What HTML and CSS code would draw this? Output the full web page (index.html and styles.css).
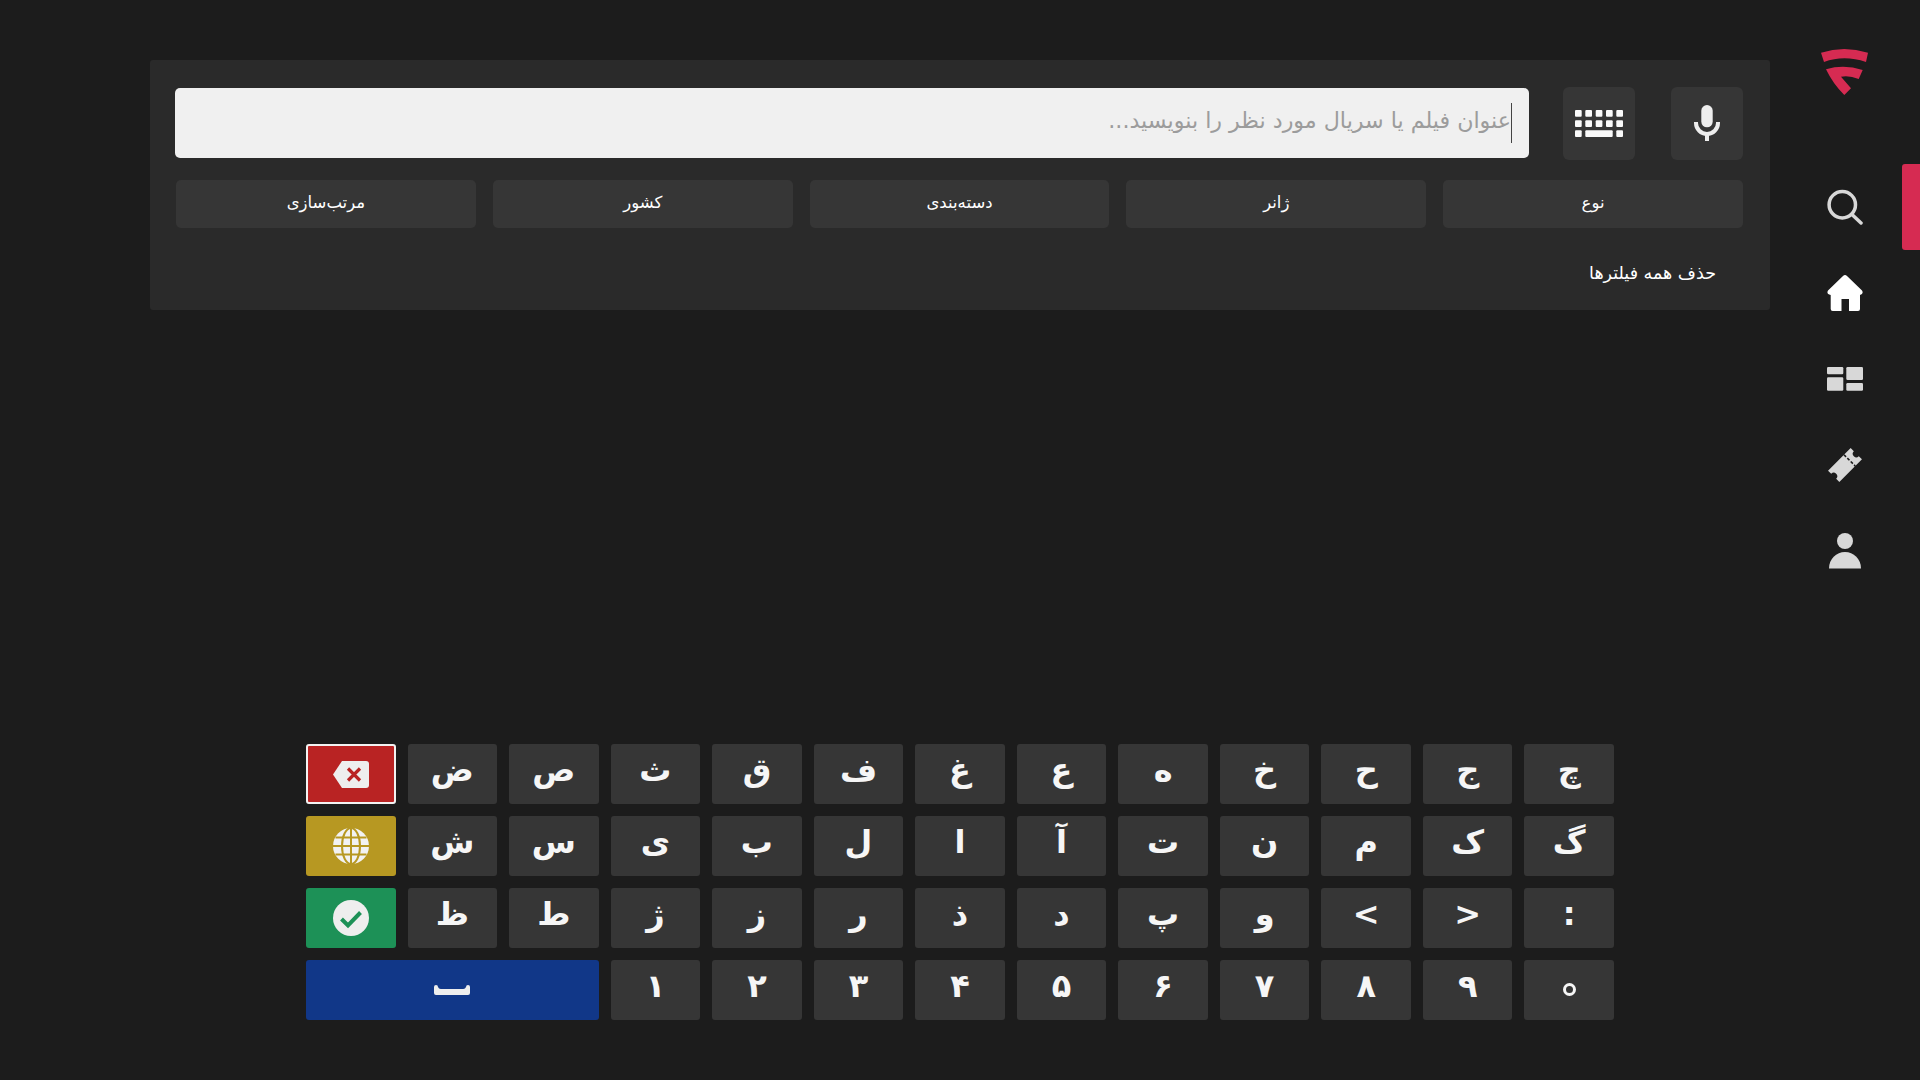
FILE: index.html
```html
<!DOCTYPE html>
<html lang="fa">
<head>
<meta charset="utf-8">
<title>جستجو</title>
<link rel="stylesheet" href="styles.css">
</head>
<body>
<main class="main">
  <section class="panel">
    <div class="search-row">
      <button class="icon-btn" aria-label="mic">
        <svg class="mic" viewBox="0 0 26 36"><rect x="7.3" y="0" width="11.4" height="22.3" rx="5.7" fill="#eee"/><path d="M2 17v1a11 11 0 0 0 22 0v-1" fill="none" stroke="#eee" stroke-width="4"/><rect x="11" y="27" width="4" height="9" fill="#eee"/></svg>
      </button>
      <button class="icon-btn" aria-label="keyboard">
        <svg class="kbd" viewBox="0 0 48 27" fill="#fafafa"><rect x="0" y="0" width="6.7" height="6.7" rx="1"/><rect x="10.3" y="0" width="6.7" height="6.7" rx="1"/><rect x="20.7" y="0" width="6.7" height="6.7" rx="1"/><rect x="31" y="0" width="6.7" height="6.7" rx="1"/><rect x="41.3" y="0" width="6.7" height="6.7" rx="1"/><rect x="0" y="10.2" width="6.7" height="6.7" rx="1"/><rect x="10.3" y="10.2" width="6.7" height="6.7" rx="1"/><rect x="20.7" y="10.2" width="6.7" height="6.7" rx="1"/><rect x="31" y="10.2" width="6.7" height="6.7" rx="1"/><rect x="41.3" y="10.2" width="6.7" height="6.7" rx="1"/><rect x="0" y="20.3" width="6.7" height="6.7" rx="1"/><rect x="10.3" y="20.3" width="27.4" height="6.7" rx="1"/><rect x="41.3" y="20.3" width="6.7" height="6.7" rx="1"/></svg>
      </button>
      <div class="search-input"><span class="placeholder">عنوان فیلم یا سریال مورد نظر را بنویسید...</span></div>
    </div>
    <div class="filters">
      <button class="filter">نوع</button>
      <button class="filter">ژانر</button>
      <button class="filter">دسته‌بندی</button>
      <button class="filter">کشور</button>
      <button class="filter">مرتب‌سازی</button>
    </div>
    <div class="clear">حذف همه فیلترها</div>
  </section>

  <section class="keyboard">
    <div class="key">چ</div><div class="key">ج</div><div class="key">ح</div><div class="key">خ</div><div class="key">ه</div><div class="key">ع</div><div class="key">غ</div><div class="key">ف</div><div class="key">ق</div><div class="key">ث</div><div class="key">ص</div><div class="key">ض</div>
    <div class="key key-del">
      <svg class="del-ic" viewBox="0 0 36 27"><path d="M9 0H33a3 3 0 0 1 3 3V24a3 3 0 0 1-3 3H9L0 13.5Z" fill="#eee"/><path d="M15 7.5l12 12M27 7.5l-12 12" stroke="#b92323" stroke-width="3.2" fill="none"/></svg>
    </div>
    <div class="key">گ</div><div class="key">ک</div><div class="key">م</div><div class="key">ن</div><div class="key">ت</div><div class="key">آ</div><div class="key">ا</div><div class="key">ل</div><div class="key">ب</div><div class="key">ی</div><div class="key">س</div><div class="key">ش</div>
    <div class="key key-lang">
      <svg class="lang-ic" viewBox="0 0 36 36"><circle cx="18" cy="18" r="18" fill="#f2f2f2"/><g fill="none" stroke="#b79822" stroke-width="2"><ellipse cx="18" cy="18" rx="9" ry="18"/><path d="M18 0V36M0 18H36M2.5 9.5H33.5M2.5 26.500H33.5"/></g></svg>
    </div>
    <div class="key">:</div><div class="key">&gt;</div><div class="key">&lt;</div><div class="key">و</div><div class="key">پ</div><div class="key">د</div><div class="key">ذ</div><div class="key">ر</div><div class="key">ز</div><div class="key">ژ</div><div class="key">ط</div><div class="key">ظ</div>
    <div class="key key-ok">
      <svg class="ok-ic" viewBox="0 0 36 36"><circle cx="18" cy="18" r="18" fill="#eee"/><path d="M8.500 19l6.500 6.500L27.500 12.500" fill="none" stroke="#1d9157" stroke-width="4"/></svg>
    </div>
    <div class="key key-zero">۰</div><div class="key">۹</div><div class="key">۸</div><div class="key">۷</div><div class="key">۶</div><div class="key">۵</div><div class="key">۴</div><div class="key">۳</div><div class="key">۲</div><div class="key">۱</div>
    <div class="key key-space">
      <svg class="space-ic" viewBox="0 0 36 10"><path d="M0 2a2 2 0 0 1 4 0 3 3 0 0 0 3 2H29a3 3 0 0 0 3-2 2 2 0 0 1 4 0V8a2 2 0 0 1-2 2H2a2 2 0 0 1-2-2Z" fill="#eee"/></svg>
    </div>
  </section>
</main>

<aside class="sidebar">
  <svg class="logo" viewBox="40 19 47 46" fill="#d62b52"><path d="M40 22.700Q63 15.500 87 22.700L85 32Q63 24.500 43 32Z"/><path d="M45 39.300Q63 34 81.700 40L77.700 49Q68 45 60 46.700L70 58.300L63.300 65Q52 54 45 39.300Z"/></svg>
  <nav class="nav">
    <div class="nav-item">
      <svg class="ic" viewBox="0 0 36 36"><circle cx="15.300" cy="15.700" r="13.200" fill="none" stroke="#d8d8d8" stroke-width="3.500"/><path d="M25 25.500L34 34" stroke="#d8d8d8" stroke-width="3.500" stroke-linecap="round"/></svg>
    </div>
    <div class="nav-item">
      <svg class="ic" viewBox="0 0 36 36"><path d="M18 0 Q19 0 20 1L35 15.500Q37 19 33 20V34a2 2 0 0 1-2 2H22V24H14.500V36H5.700a2 2 0 0 1-2-2V20Q-1 19 1 15.500L16 1Q17 0 18 0Z" fill="#fff"/></svg>
    </div>
    <div class="nav-item">
      <svg class="ic" viewBox="0 0 36 36" fill="#d8d8d8"><rect x="0" y="6" width="16.300" height="7.300" rx="1.200"/><rect x="0" y="16.300" width="16.300" height="13.400" rx="1.200"/><rect x="19.300" y="6" width="16.700" height="13" rx="1.200"/><rect x="19.300" y="22" width="16.700" height="7.700" rx="1.200"/></svg>
    </div>
    <div class="nav-item">
      <svg class="ic" viewBox="0 0 36 36"><g transform="rotate(-45 18 18)"><path d="M2 10H34V14.500A3.500 3.500 0 0 0 34 21.500V26H2V21.500A3.500 3.500 0 0 0 2 14.500Z" fill="#d8d8d8"/><path d="M24.500 10V26" stroke="#1c1c1c" stroke-width="1.600" stroke-dasharray="3 1.800"/></g></svg>
    </div>
    <div class="nav-item">
      <svg class="ic" viewBox="0 0 36 36" fill="#d8d8d8"><circle cx="18" cy="8" r="8"/><path d="M2 35.500A16 16.500 0 0 1 34 35.500Z"/></svg>
    </div>
  </nav>
  <div class="indicator"></div>
</aside>
</body>
</html>
```
FILE: styles.css
```css
* { box-sizing: border-box; }
html, body { margin: 0; height: 100%; }
body {
  display: flex;
  height: 1080px;
  overflow: hidden;
  background: #1c1c1c;
  color: #fff;
  font-family: "DejaVu Sans", sans-serif;
}
.main {
  width: 1790px;
  padding: 60px 20px 60px 150px;
  display: flex;
  flex-direction: column;
}
.panel {
  height: 250px;
  background: #2a2a2a;
  border-radius: 3px;
  padding: 27px 27px 0 25px;
  direction: rtl;
}
.search-row {
  display: flex;
  align-items: flex-start;
  gap: 36px;
  height: 73px;
}
.icon-btn {
  flex: none;
  width: 72px;
  height: 73px;
  border: 0;
  padding: 0 0 1px;
  background: #363636;
  border-radius: 6px;
  display: flex;
  align-items: center;
  justify-content: center;
}
.kbd { width: 48px; height: 27px; }
.mic { width: 26px; height: 36px; }
.search-input {
  flex: 1;
  height: 70px;
  margin: 1px -2px 0 0;
  background: #f0f0f0;
  border-radius: 5px;
  display: flex;
  align-items: center;
  padding-right: 17px;
}
.placeholder {
  color: #9c9c9c;
  font-size: 22.2px;
  line-height: 34px;
  height: 40px;
  border-right: 1px solid #444;
}
.filters {
  display: grid;
  grid-template-columns: repeat(5, 1fr);
  gap: 17px;
  margin: 20px 0 0 1px;
}
.filter {
  height: 48px;
  border: 0;
  padding: 0 0 4px;
  background: #363636;
  border-radius: 5px;
  color: #fff;
  font: inherit;
  font-size: 16.5px;
}
.clear {
  margin: 33px 27px 0 0;
  font-size: 17.5px;
  line-height: 24px;
}
.keyboard {
  margin-top: auto;
  margin-left: 156px;
  width: 1308px;
  display: grid;
  grid-template-columns: repeat(13, 1fr);
  grid-auto-rows: 60px;
  gap: 12px;
  direction: rtl;
}
.key {
  background: #363636;
  border-radius: 3px;
  display: flex;
  align-items: center;
  justify-content: center;
  direction: ltr;
  font-size: 32px;
  font-weight: 700;
  color: #f6f6f6;
  padding-bottom: 9px;
}
.key-del { background: #b92323; border: 2px solid #f2f2f2; padding: 0; }
.key-lang { background: #b79822; padding: 0; }
.key-ok { background: #1d9157; padding: 0; }
.key-space { background: #113788; grid-column: span 3; padding: 0; }
.key-zero { position: relative; color: transparent; }
.key-zero::after {
  content: "";
  box-sizing: border-box;
  position: absolute;
  left: 50%;
  top: 23px;
  width: 13px;
  height: 13px;
  margin-left: -6.5px;
  border: 3px solid #f6f6f6;
  border-radius: 50%;
}
.del-ic { width: 36px; height: 27px; }
.lang-ic, .ok-ic { width: 36px; height: 36px; }
.space-ic { width: 36px; height: 10px; }
.sidebar {
  position: relative;
  width: 130px;
  padding: 49px 20px 0 0;
  display: flex;
  flex-direction: column;
  align-items: center;
}
.logo { width: 47px; height: 46px; flex: none; margin-left: -2px; }
.nav { margin-top: 69px; display: flex; flex-direction: column; }
.nav-item {
  width: 36px;
  height: 86px;
  display: flex;
  align-items: center;
  justify-content: center;
}
.ic { width: 36px; height: 36px; }
.indicator {
  position: absolute;
  right: 0;
  top: 164px;
  width: 18px;
  height: 86px;
  background: #d62b52;
  border-radius: 3px 0 0 3px;
}
```
